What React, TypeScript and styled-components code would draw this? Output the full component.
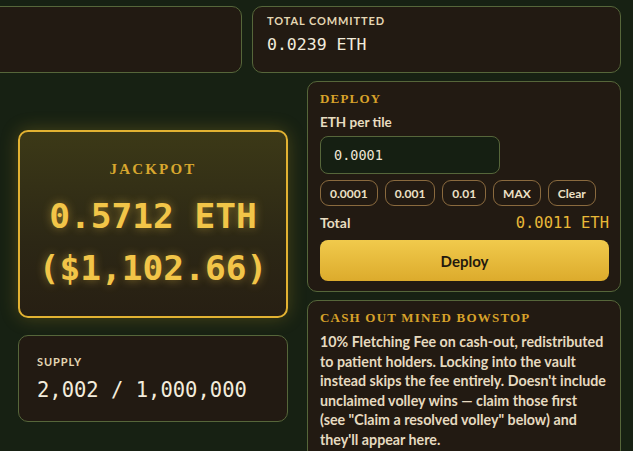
import React, { useState } from "react";
import styled, { createGlobalStyle } from "styled-components";

const GlobalStyle = createGlobalStyle`
    html, body {
        margin: 0;
        padding: 0;
        background: #172113;
        overflow: hidden;
    }
    body {
        font-family: "Lato", "Open Sans", sans-serif;
        color: #e8dcc0;
    }
`;

const CHIPS = ["0.0001", "0.001", "0.01", "MAX", "Clear"];

const App = () => {
    const [amount, setAmount] = useState("0.0001");

    const chipHandler = (value: string) => {
        if (value === "Clear") setAmount("");
        else if (value !== "MAX") setAmount(value);
    };

    return <Page>
        <GlobalStyle/>
        <TopRow>
            <StatCard/>
            <StatCard $width={369}>
                <SmallLabel>Total committed</SmallLabel>
                <MonoValue $size={16.5}>0.0239 ETH</MonoValue>
            </StatCard>
        </TopRow>

        <Main>
            <LeftColumn>
                <JackpotCard>
                    <JackpotTitle>Jackpot</JackpotTitle>
                    <JackpotValue>0.5712 ETH</JackpotValue>
                    <JackpotValue>($1,102.66)</JackpotValue>
                </JackpotCard>
                <SupplyCard>
                    <SmallLabel>Supply</SmallLabel>
                    <MonoValue $size={20.5}>2,002 / 1,000,000</MonoValue>
                </SupplyCard>
            </LeftColumn>

            <RightColumn>
                <Panel>
                    <PanelTitle>Deploy</PanelTitle>
                    <FieldLabel>ETH per tile</FieldLabel>
                    <AmountInput value={amount} onChange={e => setAmount(e.target.value)}/>
                    <ChipRow>
                        {CHIPS.map(c => <Chip key={c} onClick={() => chipHandler(c)}>{c}</Chip>)}
                    </ChipRow>
                    <TotalRow>
                        <span>Total</span>
                        <TotalValue>0.0011 ETH</TotalValue>
                    </TotalRow>
                    <DeployButton>Deploy</DeployButton>
                </Panel>
                <Panel>
                    <PanelTitle>Cash out mined bowstop</PanelTitle>
                    <Body>
                        10% Fletching Fee on cash-out, redistributed to patient holders.
                        Locking into the vault instead skips the fee entirely. Doesn't
                        include unclaimed volley wins — claim those first (see&nbsp;"Claim a
                        resolved volley" below) and they'll appear here.
                    </Body>
                </Panel>
            </RightColumn>
        </Main>
    </Page>
}

export default App;

const Page = styled.div`
    width: 633px;
    height: 451px;
    padding-top: 6px;
    box-sizing: border-box;
    overflow: hidden;
`

const TopRow = styled.div`
    display: flex;
    gap: 10px;
    margin-left: -20px;
    width: 641px;
`

const StatCard = styled.div<{ $width?: number }>`
    flex: ${p => p.$width ? `0 0 ${p.$width}px` : "1"};
    height: 67px;
    box-sizing: border-box;
    background: #221a12;
    border: 1px solid #56663a;
    border-radius: 10px;
    padding: 7px 14px;
    display: flex;
    flex-direction: column;
    gap: 7px;
`

const SmallLabel = styled.div`
    font-size: 11px;
    font-weight: 700;
    letter-spacing: 0.9px;
    text-transform: uppercase;
    color: #e4d6b2;
    line-height: 14px;
`

const MonoValue = styled.div<{ $size: number }>`
    font-family: "DejaVu Sans Mono", "Liberation Mono", monospace;
    font-size: ${p => p.$size}px;
    color: #f3ecdc;
    line-height: 1.2;
`

const Main = styled.div`
    display: grid;
    grid-template-columns: 270px 314px;
    column-gap: 19px;
    padding-left: 18px;
    margin-top: 8px;
`

const LeftColumn = styled.div`
    display: flex;
    flex-direction: column;
    gap: 17px;
    padding-top: 49px;
`

const JackpotCard = styled.div`
    height: 188px;
    box-sizing: border-box;
    border: 2px solid #e2b232;
    border-radius: 10px;
    background: linear-gradient(180deg, #3c3917 0%, #2c2715 60%, #271f13 100%);
    box-shadow: 0 0 18px rgba(200, 160, 40, 0.28);
    display: flex;
    flex-direction: column;
    align-items: center;
    padding-top: 29px;
`

const JackpotTitle = styled.div`
    font-family: "Liberation Serif", "DejaVu Serif", serif;
    font-size: 15px;
    font-weight: 700;
    letter-spacing: 2.2px;
    text-transform: uppercase;
    color: #d8a72e;
    margin-bottom: 12px;
`

const JackpotValue = styled.div`
    font-family: "DejaVu Sans Mono", "Liberation Mono", monospace;
    font-size: 34.5px;
    font-weight: 700;
    line-height: 52px;
    color: #f2c548;
    text-shadow: 0 0 10px rgba(242, 197, 72, 0.45);
`

const SupplyCard = styled.div`
    height: 87px;
    box-sizing: border-box;
    background: #221a12;
    border: 1px solid #56663a;
    border-radius: 10px;
    padding: 19px 18px;
    display: flex;
    flex-direction: column;
    gap: 9px;
`

const RightColumn = styled.div`
    display: flex;
    flex-direction: column;
    gap: 8px;
`

const Panel = styled.div`
    background: #221a12;
    border: 1px solid #56663a;
    border-radius: 10px;
    padding: 9px 11px 10px 12px;
    display: flex;
    flex-direction: column;
`

const PanelTitle = styled.div`
    font-family: "Liberation Serif", "DejaVu Serif", serif;
    font-size: 13px;
    font-weight: 700;
    letter-spacing: 1.2px;
    text-transform: uppercase;
    color: #d8a22a;
    line-height: 16px;
`

const FieldLabel = styled.div`
    font-size: 13.5px;
    font-weight: 700;
    color: #e8dcc0;
    margin-top: 7px;
    line-height: 17px;
`

const AmountInput = styled.input`
    width: 180px;
    height: 38px;
    box-sizing: border-box;
    margin-top: 5px;
    background: #151f12;
    border: 1px solid #56663a;
    border-radius: 8px;
    padding: 0 13px;
    font-family: "DejaVu Sans Mono", "Liberation Mono", monospace;
    font-size: 13.5px;
    color: #eee6d6;
    outline: none;
`

const ChipRow = styled.div`
    display: flex;
    gap: 7px;
    margin-top: 6px;
`

const Chip = styled.button`
    height: 26px;
    padding: 0 9px;
    background: transparent;
    border: 1px solid #8a6a3e;
    border-radius: 9px;
    font-family: "Lato", sans-serif;
    font-size: 12px;
    font-weight: 700;
    color: #ece0c6;
    cursor: pointer;
`

const TotalRow = styled.div`
    display: flex;
    justify-content: space-between;
    align-items: baseline;
    margin-top: 8px;
    font-size: 14px;
    font-weight: 700;
    color: #e8dcc0;
    line-height: 18px;
`

const TotalValue = styled.span`
    font-family: "DejaVu Sans Mono", "Liberation Mono", monospace;
    font-size: 15.5px;
    font-weight: 400;
    color: #e8b838;
`

const DeployButton = styled.button`
    margin-top: 8px;
    height: 41px;
    width: 100%;
    border: none;
    border-radius: 8px;
    background: linear-gradient(180deg, #f1ca4c 0%, #dcab2c 100%);
    font-family: "Lato", sans-serif;
    font-size: 15px;
    font-weight: 700;
    color: #241a0e;
    cursor: pointer;
`

const Body = styled.p`
    margin: 6px 0 0;
    font-size: 14.25px;
    font-weight: 700;
    line-height: 19.5px;
    color: #e6dac0;
`
